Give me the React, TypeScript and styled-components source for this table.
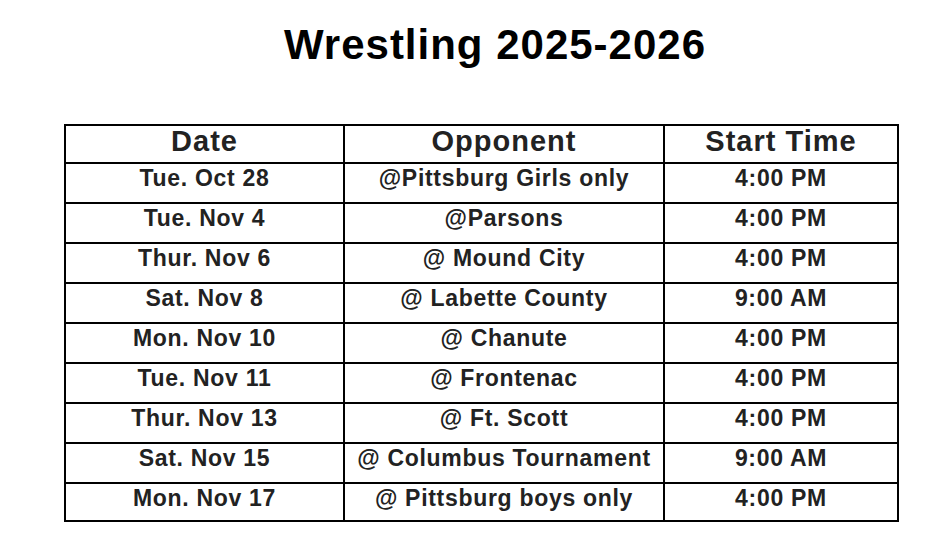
import styled, { createGlobalStyle } from "styled-components";

const GlobalStyle = createGlobalStyle`
  body {
    margin: 0;
    background: #ffffff;
    font-family: "Liberation Sans", Arial, sans-serif;
  }
`;

interface IMatch {
  date: string;
  opponent: string;
  time: string;
}

const matches: IMatch[] = [
  { date: "Tue. Oct 28", opponent: "@Pittsburg Girls only", time: "4:00 PM" },
  { date: "Tue. Nov 4", opponent: "@Parsons", time: "4:00 PM" },
  { date: "Thur. Nov 6", opponent: "@ Mound City", time: "4:00 PM" },
  { date: "Sat. Nov 8", opponent: "@ Labette County", time: "9:00 AM" },
  { date: "Mon. Nov 10", opponent: "@ Chanute", time: "4:00 PM" },
  { date: "Tue. Nov 11", opponent: "@ Frontenac", time: "4:00 PM" },
  { date: "Thur. Nov 13", opponent: "@ Ft. Scott", time: "4:00 PM" },
  { date: "Sat. Nov 15", opponent: "@ Columbus Tournament", time: "9:00 AM" },
  { date: "Mon. Nov 17", opponent: "@ Pittsburg boys only", time: "4:00 PM" },
];

function App() {
  return (
    <Page>
      <GlobalStyle />
      <Title>Wrestling 2025-2026</Title>
      <Schedule>
        <colgroup>
          <col style={{ width: 279 }} />
          <col style={{ width: 320 }} />
          <col style={{ width: 234 }} />
        </colgroup>
        <thead>
          <tr>
            <HeadCell>Date</HeadCell>
            <HeadCell>Opponent</HeadCell>
            <HeadCell>Start Time</HeadCell>
          </tr>
        </thead>
        <tbody>
          {matches.map((m, i) => (
            <Row key={i} $last={i === matches.length - 1}>
              <Cell>{m.date}</Cell>
              <Cell>{m.opponent}</Cell>
              <Cell>{m.time}</Cell>
            </Row>
          ))}
        </tbody>
      </Schedule>
    </Page>
  );
}

export default App;

const Page = styled.div`
  width: 946px;
  height: 556px;
  padding-top: 21px;
  box-sizing: border-box;
`;

const Title = styled.h1`
  margin: 0 0 55px 0;
  padding-left: 44px;
  text-align: center;
  font-size: 42px;
  line-height: 48px;
  font-weight: 700;
  letter-spacing: 1px;
  color: #000;
`;

const Schedule = styled.table`
  margin-left: 64px;
  width: 833px;
  border-collapse: collapse;
  table-layout: fixed;
  border: 2px solid #000;
  color: #222;
`;

const HeadCell = styled.th`
  border: 2px solid #000;
  height: 38px;
  padding: 0;
  box-sizing: border-box;
  vertical-align: top;
  text-align: center;
  font-size: 29px;
  line-height: 31px;
  font-weight: 700;
  letter-spacing: 1px;
`;

const Row = styled.tr<{ $last?: boolean }>`
  td {
    height: ${(p) => (p.$last ? "38px" : "40px")};
  }
`;

const Cell = styled.td`
  border: 2px solid #000;
  padding: 1px 0 0 0;
  box-sizing: border-box;
  vertical-align: top;
  text-align: center;
  font-size: 23px;
  line-height: 26px;
  font-weight: 700;
  letter-spacing: 0.7px;
  white-space: nowrap;
`;
